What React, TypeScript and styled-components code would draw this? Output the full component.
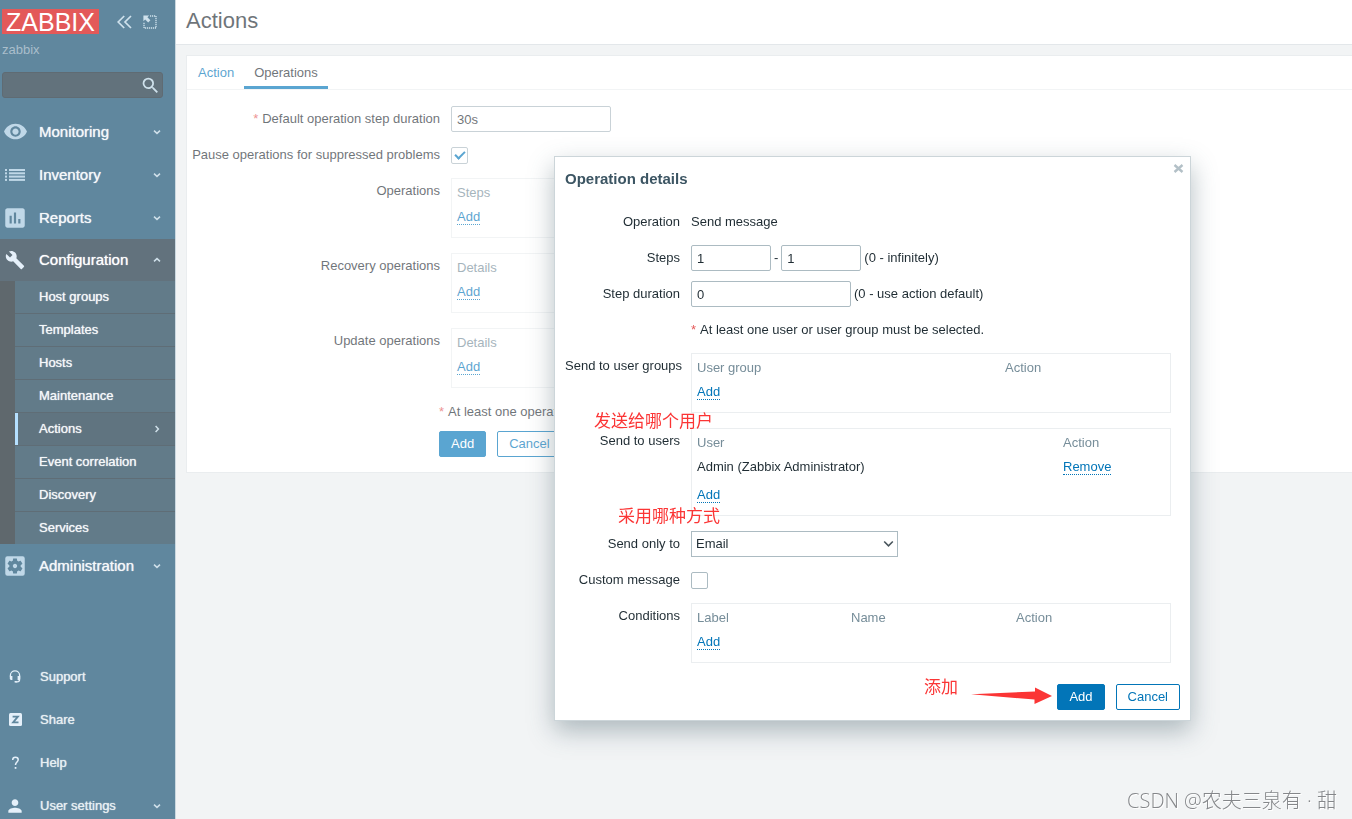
import React from 'react';
import styled, { createGlobalStyle, css } from 'styled-components';
import {
  MdVisibility,
  MdInsertChart,
  MdSettingsApplications,
  MdPerson,
  MdSearch,
} from 'react-icons/md';

const GlobalStyle = createGlobalStyle`
  *, *::before, *::after { box-sizing: border-box; }
  body {
    margin: 0;
    background: #ebeef0;
    color: #1f2c33;
    font-family: "Liberation Sans", Arial, "Noto Sans CJK SC", sans-serif;
    font-size: 13px;
    line-height: 18px;
  }
  button, input, select { font: inherit; color: inherit; margin: 0; }
`;

const Page = styled.div`
  display: grid;
  grid-template-columns: 176px 1fr;
  height: 100vh;
  overflow: hidden;
`;

/* ---------- sidebar ---------- */

const Sidebar = styled.aside`
  display: flex;
  flex-direction: column;
  overflow: hidden;
  background: #0b476b;
  border-right: 1px solid #b0c4d0;
  color: #e6edf2;
  text-shadow: 0 0 1px rgba(255, 255, 255, 0.9);

  > * { flex-shrink: 0; }
`;

const Brand = styled.div`
  display: flex;
  align-items: center;
  padding: 9px 0 0 2px;
`;

const Logo = styled.a`
  width: 97px;
  height: 25px;
  background: #d40000;
  color: #fff;
  font-size: 25px;
  line-height: 26px;
  text-align: center;
  text-decoration: none;
  text-shadow: none;
`;

const GhostButton = styled.button`
  display: flex;
  padding: 0;
  border: 0;
  background: none;
  color: #b5d2e2;
  cursor: pointer;
`;

const BrandTools = styled.div`
  display: flex;
  align-items: center;
  gap: 11px;
  margin-left: 18px;
`;

const ServerName = styled.div`
  padding: 7px 2px 0;
  color: #7d9cb0;
  text-shadow: none;
`;

const SearchForm = styled.form`
  display: flex;
  align-items: center;
  height: 26px;
  margin: 13px 12px 12px 2px;
  padding-right: 1px;
  border: 1px solid #0a1c28;
  border-radius: 3px;
  background: #0f2736;
`;

const SearchInput = styled.input`
  flex: 1;
  min-width: 0;
  padding: 0 6px;
  border: 0;
  background: none;
  outline: 0;
`;

const Menu = styled.ul`
  margin: 0;
  padding: 0;
  list-style: none;
`;

const MenuLink = styled.a<{ $open?: boolean; $small?: boolean }>`
  display: grid;
  grid-template-columns: 30px 1fr 36px;
  align-items: center;
  height: ${(p) => (p.$open ? 42 : 43)}px;
  color: ${(p) => (p.$small ? '#dbe6ec' : '#f0f4f7')};
  font-size: ${(p) => (p.$small ? 13 : 15)}px;
  text-decoration: none;
  ${(p) =>
    p.$open &&
    css`
      background: #0f2738;
      color: #fff;
    `}
`;

const MenuIcon = styled.span<{ $bright?: boolean }>`
  display: flex;
  justify-content: center;
  color: ${(p) => (p.$bright ? '#d7e9f7' : '#9fc4dc')};
`;

const MenuText = styled.span<{ $small?: boolean }>`
  padding-left: ${(p) => (p.$small ? 10 : 9)}px;
`;

const MenuArrow = styled.span`
  display: flex;
  justify-content: center;
  color: #b5cfde;
`;

const SubMenu = styled.ul`
  margin: 0;
  padding: 0 0 0 15px;
  list-style: none;
  background: #0a171f;
`;

const SubItem = styled.li`
  background: #0e354b;
  & + & { border-top: 1px solid #0a1f2d; }
`;

const SubLink = styled.a<{ $active?: boolean }>`
  display: grid;
  grid-template-columns: 1fr 36px;
  align-items: center;
  height: 32px;
  padding-left: 21px;
  border-left: 3px solid ${(p) => (p.$active ? '#8ed0ff' : 'transparent')};
  background: ${(p) => (p.$active ? '#0c2a3c' : 'transparent')};
  color: #f0f4f7;
  text-decoration: none;
`;

const BottomMenu = styled(Menu)`
  margin-top: 68px;
`;

/* ---------- main area ---------- */

const Main = styled.main`
  min-width: 0;
`;

const PageHeader = styled.header`
  height: 45px;
  padding: 7px 10px;
  background: #fff;
  border-bottom: 1px solid #d5dbdf;
`;

const PageTitle = styled.h1`
  margin: 0;
  color: #1f2c33;
  font-size: 22px;
  font-weight: 400;
  line-height: 28px;
`;

const Panel = styled.section`
  margin: 10px 0 0 10px;
  border: 1px solid #dfe4e7;
  border-right: 0;
  background: #fff;
`;

const Tabs = styled.nav`
  display: flex;
  padding-left: 1px;
  border-bottom: 1px solid #ebeef0;
`;

const Tab = styled.a<{ $active?: boolean }>`
  height: 33px;
  padding: 0 10px;
  border-bottom: 3px solid ${(p) => (p.$active ? '#0275b8' : 'transparent')};
  color: ${(p) => (p.$active ? '#1f2c33' : '#0275b8')};
  line-height: 33px;
  text-decoration: none;
`;

/* ---------- forms ---------- */

const FormGrid = styled.form<{ $labelWidth: number }>`
  display: grid;
  grid-template-columns: ${(p) => p.$labelWidth}px 1fr;
  gap: 10px 11px;
`;

const PageForm = styled(FormGrid)`
  max-width: 900px;
  padding: 16px 10px 15px 0;
`;

const labelStyle = css`
  line-height: 26px;
  text-align: right;
  white-space: nowrap;
`;

const Label = styled.label`
  ${labelStyle}
`;

const LabelText = styled.div`
  ${labelStyle}
`;

const Field = styled.div<{ $block?: boolean }>`
  display: flex;
  align-items: ${(p) => (p.$block ? 'stretch' : 'center')};
  gap: 3px;
  min-height: 26px;
  margin-bottom: ${(p) => (p.$block ? 5 : 0)}px;
`;

const TextInput = styled.input<{ $width: number }>`
  width: ${(p) => p.$width}px;
  height: 26px;
  padding: 0 5px;
  border: 1px solid #acbbc2;
  border-radius: 2px;
  background: #fff;
`;

const Checkbox = styled.input.attrs({ type: 'checkbox' })`
  display: flex;
  align-items: center;
  justify-content: center;
  width: 17px;
  height: 17px;
  appearance: none;
  border: 1px solid #acbbc2;
  border-radius: 2px;
  background: #fff;

  &:checked::after {
    content: '';
    width: 10px;
    height: 6px;
    margin-bottom: 3px;
    border: solid #0275b8;
    border-width: 0 0 2px 2px;
    transform: rotate(-45deg);
  }
`;

const Star = styled.span`
  margin-right: 4px;
  color: #e45959;
`;

const Box = styled.div`
  flex: 1;
  min-height: 60px;
  padding: 2px 5px 8px;
  border: 1px solid #ebeef0;
`;

const Table = styled.table`
  width: 100%;
  border-collapse: collapse;
  table-layout: fixed;

  th, td {
    height: 24px;
    padding: 0;
    font-weight: 400;
    text-align: left;
  }
  th { color: #768d99; }
`;

const Th = styled.th<{ $width?: number }>`
  width: ${(p) => (p.$width ? `${p.$width}px` : 'auto')};
`;

const AddCell = styled.td<{ $spaced: boolean }>`
  && {
    height: ${(p) => (p.$spaced ? 28 : 24)}px;
    padding-top: ${(p) => (p.$spaced ? 4 : 0)}px;
  }
`;

const DottedLink = styled.a`
  display: inline-block;
  height: 17px;
  border-bottom: 1px dotted #0275b8;
  color: #0275b8;
  line-height: 17px;
  text-decoration: none;
`;

const Button = styled.button<{ $primary?: boolean }>`
  height: 26px;
  padding: 0 11px;
  border: 1px solid #0275b8;
  border-radius: 2px;
  background: ${(p) => (p.$primary ? '#0275b8' : '#fff')};
  color: ${(p) => (p.$primary ? '#fff' : '#0275b8')};
  cursor: pointer;
`;

const PageFormEnd = styled.div`
  grid-column: 1 / -1;
  display: flex;
  gap: 11px;
  padding-left: 252px;
  white-space: nowrap;
`;

/* ---------- dialog ---------- */

const Veil = styled.div`
  position: fixed;
  inset: 0;
  background: rgba(255, 255, 255, 0.35);
`;

const DialogLayer = styled.div`
  position: fixed;
  inset: 0;
  display: flex;
  align-items: flex-start;
  justify-content: flex-end;
  padding: 156px 161px 0 0;
`;

const Dialog = styled.section`
  position: relative;
  width: 637px;
  padding: 10px;
  border: 1px solid #ccd5d9;
  background: #fff;
  box-shadow: 0 10px 24px rgba(70, 95, 105, 0.4);
`;

const DialogTitle = styled.h2`
  margin: 0 0 18px;
  color: #3c5563;
  font-size: 15px;
  line-height: 24px;
`;

const CloseButton = styled(GhostButton)`
  position: absolute;
  top: 6px;
  right: 6px;
  color: #b3c0c7;
`;

const DialogForm = styled(FormGrid)`
  padding-right: 9px;
`;

const SelectWrap = styled.div`
  display: grid;
  grid-template-columns: 207px;
  align-items: center;
  color: #49555c;

  > * { grid-area: 1 / 1; }
  > svg {
    justify-self: end;
    margin-right: 4px;
    pointer-events: none;
  }
`;

const Select = styled.select`
  width: 100%;
  height: 26px;
  padding: 0 20px 0 4px;
  appearance: none;
  border: 1px solid #acbbc2;
  border-radius: 0;
  background: #fff;
  color: #1f2c33;
`;

const DialogFooter = styled.footer`
  display: flex;
  justify-content: flex-end;
  gap: 11px;
  margin-top: 16px;
`;

/* ---------- marks drawn over the dialog ---------- */

const Note = styled.span<{ $left: number; $top: number }>`
  position: absolute;
  left: ${(p) => p.$left}px;
  top: ${(p) => p.$top}px;
  color: #fb3535;
  font-family: "Noto Sans CJK SC", sans-serif;
  font-size: 17px;
  line-height: 20px;
  white-space: nowrap;
`;

const NoteArrow = styled.svg`
  position: absolute;
  left: 416px;
  top: 530px;
`;

const Watermark = styled.div`
  position: fixed;
  right: 15px;
  bottom: 5px;
  color: #85878a;
  font-family: "Open Sans", "Noto Sans CJK SC", sans-serif;
  font-size: 20px;
  font-weight: 300;
  line-height: 26px;
  text-shadow: 1px 1px 0 #fff;
  white-space: nowrap;
`;

/* ---------- small drawings ---------- */

const Chevron = ({ turn = 0 }: { turn?: number }) => (
  <svg width="8" height="8" viewBox="0 0 8 8" aria-hidden="true">
    <path d="M1 2.6 4 5.400 7 2.6" fill="none" stroke="currentColor" strokeWidth="1.5" transform={`rotate(${turn} 4 4)`} />
  </svg>
);

const SelectArrow = () => (
  <svg width="11" height="8" viewBox="0 0 11 8" aria-hidden="true">
    <path d="M1.200 1.500 5.500 5.800 9.800 1.500" fill="none" stroke="currentColor" strokeWidth="1.6" />
  </svg>
);

const ListIcon = () => (
  <svg width="20" height="12" viewBox="0 0 20 12" fill="currentColor" aria-hidden="true">
    {[0, 3.3, 6.6, 9.9].map((y) => (
      <g key={y}>
        <rect x="0" y={y} width="2" height="2" />
        <rect x="4" y={y} width="16" height="2" />
      </g>
    ))}
  </svg>
);

const WrenchIcon = () => (
  <svg width="20" height="20" viewBox="0 0 24 24" fill="currentColor" aria-hidden="true">
    <path d="M22.700 19l-9.100-9.100c.9-2.300.4-5-1.500-6.900-2-2-5-2.400-7.400-1.300L9 6 6 9 1.600 4.700C.4 7.100.9 10.100 2.900 12.100c1.900 1.900 4.600 2.400 6.900 1.500l9.100 9.100c.4.4 1 .4 1.400 0l2.300-2.300c.5-.4.5-1.100.1-1.400z" />
  </svg>
);

const CollapseIcon = () => (
  <svg width="15" height="14" viewBox="0 0 15 14" aria-hidden="true">
    <path d="M7.2 1 1.2 7l6 6M14 1 8 7l6 6" fill="none" stroke="currentColor" strokeWidth="1.7" />
  </svg>
);

const KioskIcon = () => (
  <svg width="14" height="14" viewBox="0 0 14 14" aria-hidden="true">
    <path d="M7 1h6M13 1v12M13 13H1M1 13V7" fill="none" stroke="currentColor" strokeWidth="1.300" strokeDasharray="1.200 .8" />
    <path d="M.4.4h5.800L4.400 2.200l3 3-2.200 2.200-3-3L.4 6.200z" fill="currentColor" />
  </svg>
);

const HeadsetIcon = () => (
  <svg width="12" height="13" viewBox="0 0 12 13" aria-hidden="true">
    <path d="M1.400 6.500V5.300a4.600 4.400 0 0 1 9.200 0v4.200c0 1.500-1 2.300-2.400 2.300H6.500" fill="none" stroke="currentColor" strokeWidth="1.300" />
    <path d="M.8 6h2.600v4H2.200C1.300 10 .8 9.400.8 8.600zM11.200 6H8.600v4h1.200c.9 0 1.400-.6 1.400-1.400zM5.600 11h2.200v1.600H5.600z" fill="currentColor" />
  </svg>
);

const ShareIcon = () => (
  <svg width="13" height="13" viewBox="0 0 13 13" aria-hidden="true">
    <rect width="13" height="13" rx="1.5" fill="currentColor" />
    <path d="M3.600 3.600h5.300L4.100 9.400h5.400" fill="none" stroke="#0b476b" strokeWidth="1.8" />
  </svg>
);

const HelpIcon = () => (
  <svg width="9" height="14" viewBox="0 0 9 14" aria-hidden="true">
    <path d="M1.700 4C1.700 2.200 2.800 1.300 4.400 1.300S7.200 2.300 7.200 3.800C7.200 5.900 4.500 6.200 4.500 9" fill="none" stroke="currentColor" strokeWidth="1.5" />
    <rect x="3.700" y="11" width="1.700" height="1.800" fill="currentColor" />
  </svg>
);

const CloseIcon = () => (
  <svg width="11" height="11" viewBox="0 0 11 11" aria-hidden="true">
    <path d="M1.500 2l8 7M9.500 2l-8 7" fill="none" stroke="currentColor" strokeWidth="2.4" />
  </svg>
);

/* ---------- data ---------- */

const sections = [
  { name: 'Monitoring', icon: <MdVisibility size={25} /> },
  { name: 'Inventory', icon: <ListIcon /> },
  { name: 'Reports', icon: <MdInsertChart size={26} /> },
  {
    name: 'Configuration',
    icon: <WrenchIcon />,
    children: ['Host groups', 'Templates', 'Hosts', 'Maintenance', 'Actions', 'Event correlation', 'Discovery', 'Services'],
  },
  { name: 'Administration', icon: <MdSettingsApplications size={26} /> },
];

const helpers = [
  { name: 'Support', icon: <HeadsetIcon /> },
  { name: 'Share', icon: <ShareIcon /> },
  { name: 'Help', icon: <HelpIcon /> },
  { name: 'User settings', icon: <MdPerson size={20} />, arrow: true },
];

type Column = { name: string; width?: number };

const ListBox = ({ columns, rows = [] }: { columns: Column[]; rows?: React.ReactNode[][] }) => (
  <Box>
    <Table>
      <thead>
        <tr>
          {columns.map((c) => (
            <Th key={c.name} scope="col" $width={c.width}>{c.name}</Th>
          ))}
        </tr>
      </thead>
      <tbody>
        {rows.map((cells, i) => (
          <tr key={i}>{cells.map((cell, j) => <td key={j}>{cell}</td>)}</tr>
        ))}
        <tr>
          <AddCell colSpan={columns.length} $spaced={rows.length > 0}>
            <DottedLink href="#">Add</DottedLink>
          </AddCell>
        </tr>
      </tbody>
    </Table>
  </Box>
);

const SideNavigation = () => (
  <Sidebar>
    <Brand>
      <Logo href="#">ZABBIX</Logo>
      <BrandTools>
        <GhostButton type="button" aria-label="Collapse sidebar"><CollapseIcon /></GhostButton>
        <GhostButton type="button" aria-label="Hide sidebar"><KioskIcon /></GhostButton>
      </BrandTools>
    </Brand>
    <ServerName>zabbix</ServerName>
    <SearchForm role="search">
      <SearchInput type="text" aria-label="Search" />
      <GhostButton type="button" aria-label="Run search"><MdSearch size={21} /></GhostButton>
    </SearchForm>
    <Menu>
      {sections.map((s) => (
        <li key={s.name}>
          <MenuLink href="#" $open={!!s.children}>
            <MenuIcon $bright={!!s.children}>{s.icon}</MenuIcon>
            <MenuText>{s.name}</MenuText>
            <MenuArrow><Chevron turn={s.children ? 180 : 0} /></MenuArrow>
          </MenuLink>
          {s.children && (
            <SubMenu>
              {s.children.map((name) => (
                <SubItem key={name}>
                  <SubLink href="#" $active={name === 'Actions'}>
                    {name}
                    {name === 'Actions' && <MenuArrow><Chevron turn={-90} /></MenuArrow>}
                  </SubLink>
                </SubItem>
              ))}
            </SubMenu>
          )}
        </li>
      ))}
    </Menu>
    <BottomMenu>
      {helpers.map((h) => (
        <li key={h.name}>
          <MenuLink href="#" $small>
            <MenuIcon $bright>{h.icon}</MenuIcon>
            <MenuText $small>{h.name}</MenuText>
            {h.arrow && <MenuArrow><Chevron /></MenuArrow>}
          </MenuLink>
        </li>
      ))}
    </BottomMenu>
  </Sidebar>
);

const ActionPage = () => (
  <Main>
    <PageHeader><PageTitle>Actions</PageTitle></PageHeader>
    <Panel>
      <Tabs>
        <Tab href="#">Action</Tab>
        <Tab href="#" $active>Operations</Tab>
      </Tabs>
      <PageForm $labelWidth={253} onSubmit={(e) => e.preventDefault()}>
        <Label htmlFor="esc_period"><Star>*</Star>Default operation step duration</Label>
        <Field><TextInput id="esc_period" type="text" defaultValue="30s" $width={160} /></Field>
        <Label htmlFor="pause">Pause operations for suppressed problems</Label>
        <Field><Checkbox id="pause" defaultChecked /></Field>
        <LabelText>Operations</LabelText>
        <Field $block><ListBox columns={[{ name: 'Steps' }]} /></Field>
        <LabelText>Recovery operations</LabelText>
        <Field $block><ListBox columns={[{ name: 'Details' }]} /></Field>
        <LabelText>Update operations</LabelText>
        <Field $block><ListBox columns={[{ name: 'Details' }]} /></Field>
        <PageFormEnd><span><Star>*</Star>At least one operation.</span></PageFormEnd>
        <PageFormEnd>
          <Button type="submit" $primary>Add</Button>
          <Button type="button">Cancel</Button>
        </PageFormEnd>
      </PageForm>
    </Panel>
  </Main>
);

const OperationDialog = () => (
  <DialogLayer>
    <Dialog role="dialog" aria-labelledby="dialog-title">
      <CloseButton type="button" aria-label="Close"><CloseIcon /></CloseButton>
      <DialogTitle id="dialog-title">Operation details</DialogTitle>
      <DialogForm id="operation" $labelWidth={115} onSubmit={(e) => e.preventDefault()}>
        <LabelText>Operation</LabelText>
        <Field>Send message</Field>
        <Label htmlFor="step_from">Steps</Label>
        <Field>
          <TextInput id="step_from" type="text" defaultValue="1" $width={80} />
          -
          <TextInput type="text" aria-label="Last step" defaultValue="1" $width={80} />
          (0 - infinitely)
        </Field>
        <Label htmlFor="step_duration">Step duration</Label>
        <Field>
          <TextInput id="step_duration" type="text" defaultValue="0" $width={160} />
          (0 - use action default)
        </Field>
        <span />
        <Field><span><Star>*</Star>At least one user or user group must be selected.</span></Field>
        <LabelText>Send to user groups</LabelText>
        <Field $block>
          <ListBox columns={[{ name: 'User group', width: 308 }, { name: 'Action' }]} />
        </Field>
        <LabelText>Send to users</LabelText>
        <Field $block>
          <ListBox
            columns={[{ name: 'User', width: 366 }, { name: 'Action' }]}
            rows={[['Admin (Zabbix Administrator)', <DottedLink href="#">Remove</DottedLink>]]}
          />
        </Field>
        <Label htmlFor="media">Send only to</Label>
        <Field>
          <SelectWrap>
            <Select id="media" defaultValue="Email"><option>Email</option></Select>
            <SelectArrow />
          </SelectWrap>
        </Field>
        <Label htmlFor="custom">Custom message</Label>
        <Field><Checkbox id="custom" /></Field>
        <LabelText>Conditions</LabelText>
        <Field $block>
          <ListBox columns={[{ name: 'Label', width: 154 }, { name: 'Name', width: 165 }, { name: 'Action' }]} />
        </Field>
      </DialogForm>
      <DialogFooter>
        <Button type="submit" form="operation" $primary>Add</Button>
        <Button type="button">Cancel</Button>
      </DialogFooter>
      <Note $left={39} $top={253}>发送给哪个用户</Note>
      <Note $left={63} $top={348}>采用哪种方式</Note>
      <Note $left={369} $top={519}>添加</Note>
      <NoteArrow width="81" height="18" viewBox="0 0 81 18" aria-hidden="true">
        <path d="M0 7.300 64 4.500V.5l17 8.500-17.500 8v-4.500z" fill="#fb3535" />
      </NoteArrow>
    </Dialog>
  </DialogLayer>
);

export default function App() {
  return (
    <>
      <GlobalStyle />
      <Page>
        <SideNavigation />
        <ActionPage />
      </Page>
      <Veil />
      <OperationDialog />
      <Watermark>CSDN @农夫三泉有 · 甜</Watermark>
    </>
  );
}
